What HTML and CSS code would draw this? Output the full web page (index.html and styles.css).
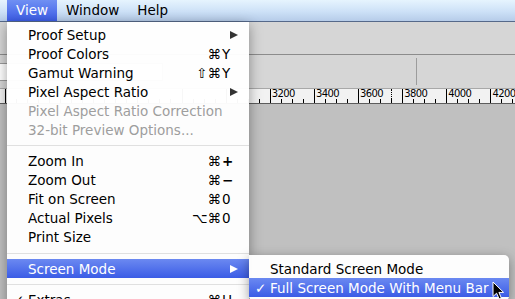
FILE: index.html
```html
<!DOCTYPE html>
<html lang="en">
<head>
<meta charset="utf-8">
<title>View menu</title>
<link rel="stylesheet" href="styles.css">
</head>
<body>
<div class="screen">

    <!-- menu bar -->
    <div class="menubar">
        <span class="menu-title active">View</span>
        <span class="menu-title">Window</span>
        <span class="menu-title">Help</span>
    </div>

    <!-- the document window behind the menu -->
    <div class="app">
        <div class="toolbar"></div>
        <div class="options">
            <div class="field"></div>
            <div class="divider"></div>
        </div>
        <div class="ruler">
            <!-- marks under the menu carry no label -->
            <span class="mark"></span>
            <span class="mark"></span>
            <span class="mark"></span>
            <span class="mark"></span>
            <span class="mark"></span>
            <span class="mark"></span>
            <span class="mark">3200</span>
            <span class="mark">3400</span>
            <span class="mark">3600</span>
            <span class="mark">3800</span>
            <span class="mark">4000</span>
            <span class="mark">4200</span>
            <span class="pointer"></span>
        </div>
        <div class="canvas"></div>
    </div>

    <!-- View menu -->
    <div class="menu">
        <div class="item"><span class="check"></span><span class="label">Proof Setup</span><span class="arrow"></span></div>
        <div class="item"><span class="check"></span><span class="label">Proof Colors</span><span class="mods">⌘</span><span class="key">Y</span></div>
        <div class="item"><span class="check"></span><span class="label">Gamut Warning</span><span class="mods">⇧⌘</span><span class="key">Y</span></div>
        <div class="item"><span class="check"></span><span class="label">Pixel Aspect Ratio</span><span class="arrow"></span></div>
        <div class="item disabled"><span class="check"></span><span class="label">Pixel Aspect Ratio Correction</span></div>
        <div class="item disabled"><span class="check"></span><span class="label">32-bit Preview Options...</span></div>
        <div class="sep"></div>
        <div class="item"><span class="check"></span><span class="label">Zoom In</span><span class="mods">⌘</span><span class="key bold">+</span></div>
        <div class="item"><span class="check"></span><span class="label">Zoom Out</span><span class="mods">⌘</span><span class="key bold">−</span></div>
        <div class="item"><span class="check"></span><span class="label">Fit on Screen</span><span class="mods">⌘</span><span class="key">0</span></div>
        <div class="item"><span class="check"></span><span class="label">Actual Pixels</span><span class="mods">⌥⌘</span><span class="key">0</span></div>
        <div class="item"><span class="check"></span><span class="label">Print Size</span></div>
        <div class="sep"></div>
        <div class="item selected"><span class="check"></span><span class="label">Screen Mode</span><span class="arrow"></span></div>
        <div class="sep"></div>
        <div class="item"><span class="check">✓</span><span class="label">Extras</span><span class="mods">⌘</span><span class="key">H</span></div>
    </div>

    <!-- Screen Mode submenu -->
    <div class="submenu">
        <div class="item"><span class="check"></span><span class="label">Standard Screen Mode</span></div>
        <div class="item selected"><span class="check">✓</span><span class="label">Full Screen Mode With Menu Bar</span></div>
    </div>

    <svg class="cursor" width="14" height="20" viewBox="0 0 14 20">
        <path d="M1 1 L1 15.5 L4.6 12.2 L7.1 17.9 L9.3 16.9 L6.9 11.4 L11.6 11.4 Z" fill="#000" stroke="#fff" stroke-width="1" stroke-linejoin="round"/>
    </svg>

</div>
</body>
</html>
```

FILE: styles.css
```css
* {
    box-sizing: border-box;
}

html, body {
    margin: 0;
}

body {
    width: 515px;
    height: 299px;
    overflow: hidden;
    font-family: "DejaVu Sans", sans-serif;
    font-size: 13.5px;
    color: #000;
}

.screen {
    position: relative;
    width: 515px;
    height: 299px;
    overflow: hidden;
    background: #c0c0c0;
}

/* menu bar */
.menubar {
    display: flex;
    height: 22px;
    padding-left: 7px;
    background: linear-gradient(#e6f4fe, #cde1f7 55%, #b6cce9);
    border-bottom: 1px solid #56698a;
}

.menu-title {
    padding: 0 9px;
    line-height: 21px;
}

.menu-title.active {
    color: #fff;
    background: linear-gradient(#7090f3, #3c5de7);
}

/* document window */
.toolbar {
    height: 33px;
    background: #d6d6d6;
    border-bottom: 1px solid #8c8c8c;
}

.options {
    display: flex;
    align-items: center;
    height: 33px;
    background: #d6d6d6;
}

.field {
    width: 173px;
    height: 18px;
    margin-left: -10px;
    background: #fff;
    border: 1px solid #9a9a9a;
}

.divider {
    width: 1px;
    height: 27px;
    margin-left: 253px;
    background: #9c9c9c;
}

.ruler {
    position: relative;
    display: flex;
    height: 16px;
    padding-left: 5px;
    background: #f2f2f2;
    border-top: 1px solid #a8a8a8;
    border-bottom: 1px solid #5c5c5c;
}

.mark {
    flex: 0 0 44.14px;
    padding-left: 1px;
    border-left: 1px solid #000;
    font-size: 10px;
    letter-spacing: -0.6px;
    line-height: 10px;
    background-image: linear-gradient(#000, #000), linear-gradient(#000, #000), linear-gradient(#000, #000);
    background-size: 1px 4px;
    background-position: 10px 100%, 21px 100%, 32px 100%;
    background-repeat: no-repeat;
}

.pointer {
    position: absolute;
    left: 391px;
    top: 0;
    bottom: 0;
    border-left: 1px dotted #000;
}

/* menus */
.menu,
.submenu {
    position: absolute;
    background: rgba(255, 255, 255, 0.97);
    box-shadow: 0 3px 12px rgba(0, 0, 0, 0.38);
}

.menu {
    left: 7px;
    top: 22px;
    width: 242px;
    padding-top: 3px;
}

.submenu {
    left: 249px;
    top: 255px;
    width: 260px;
    padding: 4px 0;
    border-radius: 0 5px 5px 5px;
}

.item {
    display: flex;
    align-items: center;
    height: 19px;
    padding: 0 16px 0 6px;
    white-space: nowrap;
}

.check {
    width: 15px;
}

.label {
    flex: 1;
}

.mods {
    padding-right: 1px;
    text-align: right;
}

.key {
    width: 11px;
}

.key.bold {
    font-weight: bold;
}

.arrow {
    width: 0;
    height: 0;
    margin-right: -5px;
    border-left: 8px solid #333;
    border-top: 4px solid transparent;
    border-bottom: 4px solid transparent;
}

.item.disabled {
    color: #9e9e9e;
}

.item.selected {
    color: #fff;
    background: linear-gradient(#6b89f1, #3b5ce6);
}

.item.selected .arrow {
    border-left-color: #fff;
}

.sep {
    height: 12.5px;
    padding-top: 6px;
}

.sep::before {
    content: "";
    display: block;
    height: 1px;
    background: #e0e0e0;
}

.cursor {
    position: absolute;
    left: 492px;
    top: 281px;
}
```
